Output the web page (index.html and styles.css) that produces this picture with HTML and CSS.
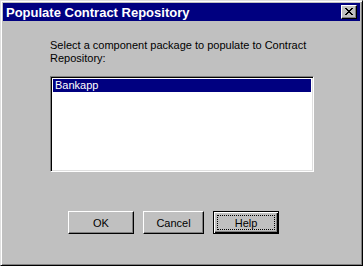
FILE: index.html
```html
<!DOCTYPE html>
<html>
<head>
<meta charset="utf-8">
<link rel="stylesheet" href="styles.css">
</head>
<body>
<div class="window">
  <div class="titlebar">
    <span class="title">Populate Contract Repository</span>
    <button class="close" aria-label="Close">
      <svg width="8" height="7" viewBox="0 0 8 7"><path d="M0 0h2v1h1v1h2V1h1V0h2v1H7v1H6v1H5v1h1v1h1v1h1v1H6V6H5V5H3v1H2v1H0V6h1V5h1V4h1V3H2V2H1V1H0z" fill="#000"/></svg>
    </button>
  </div>
  <div class="content">
    <p class="label">Select a component package to populate to Contract Repository:</p>
    <div class="listbox">
      <div class="item selected">Bankapp</div>
    </div>
    <div class="buttons">
      <button class="btn">OK</button>
      <button class="btn narrow">Cancel</button>
      <button class="btn default"><span class="focus">Help</span></button>
    </div>
  </div>
</div>
</body>
</html>
```
FILE: styles.css
```css
html, body {
  margin: 0;
  padding: 0;
  background: #c0c0c0;
}
.window {
  box-sizing: border-box;
  width: 363px;
  height: 266px;
  background: #c0c0c0;
  border-top: 1px solid #dfdfdf;
  border-left: 1px solid #dfdfdf;
  border-right: 1px solid #000;
  border-bottom: 1px solid #000;
  box-shadow: inset 1px 1px 0 #fff, inset -1px -1px 0 #808080;
  padding: 2px;
  display: flex;
  flex-direction: column;
  font-family: "Liberation Sans", Arial, sans-serif;
}
.titlebar {
  height: 18px;
  background: #000080;
  display: flex;
  align-items: center;
  justify-content: space-between;
  padding: 0 3px 0 3px;
}
.title {
  color: #fff;
  font-weight: bold;
  font-size: 13px;
}
.close {
  box-sizing: border-box;
  width: 16px;
  height: 14px;
  padding: 0;
  margin: 0;
  background: #c0c0c0;
  border-top: 1px solid #fff;
  border-left: 1px solid #fff;
  border-right: 1px solid #000;
  border-bottom: 1px solid #000;
  box-shadow: inset -1px -1px 0 #808080;
  display: flex;
  align-items: center;
  justify-content: center;
}
.close svg { display: block; margin-top: -1px; }
.content {
  flex: 1;
  display: flex;
  flex-direction: column;
  padding: 18px 46px 0 47px;
}
.label {
  margin: 0;
  font-size: 11px;
  line-height: 13px;
  color: #000;
  width: 262px;
}
.listbox {
  box-sizing: border-box;
  margin-top: 11px;
  height: 96px;
  background: #fff;
  border-top: 1px solid #808080;
  border-left: 1px solid #808080;
  border-right: 1px solid #fff;
  border-bottom: 1px solid #fff;
  box-shadow: inset 1px 1px 0 #000, inset -1px -1px 0 #dfdfdf;
  padding: 2px;
}
.item {
  height: 13px;
  font-size: 11px;
  line-height: 13px;
  padding-left: 2px;
}
.item.selected {
  background: #000080;
  color: #fff;
}
.buttons {
  display: flex;
  gap: 9px;
  margin-top: 39px;
  padding-left: 18px;
}
.btn {
  box-sizing: border-box;
  width: 66px;
  height: 23px;
  padding: 0;
  margin: 0;
  background: #c0c0c0;
  font-family: "Liberation Sans", Arial, sans-serif;
  font-size: 11px;
  color: #000;
  border-top: 1px solid #fff;
  border-left: 1px solid #fff;
  border-right: 1px solid #000;
  border-bottom: 1px solid #000;
  box-shadow: inset -1px -1px 0 #808080;
}
.btn.narrow {
  width: 61px;
}
.btn.default {
  border: 1px solid #000;
  box-shadow: inset 1px 1px 0 #fff, inset -1px -1px 0 #000, inset -2px -2px 0 #808080;
  display: flex;
  align-items: center;
  justify-content: center;
  padding: 3px;
}
.focus {
  box-sizing: border-box;
  flex: 1;
  height: 100%;
  border: 1px dotted #000;
  display: flex;
  align-items: center;
  justify-content: center;
}
```
